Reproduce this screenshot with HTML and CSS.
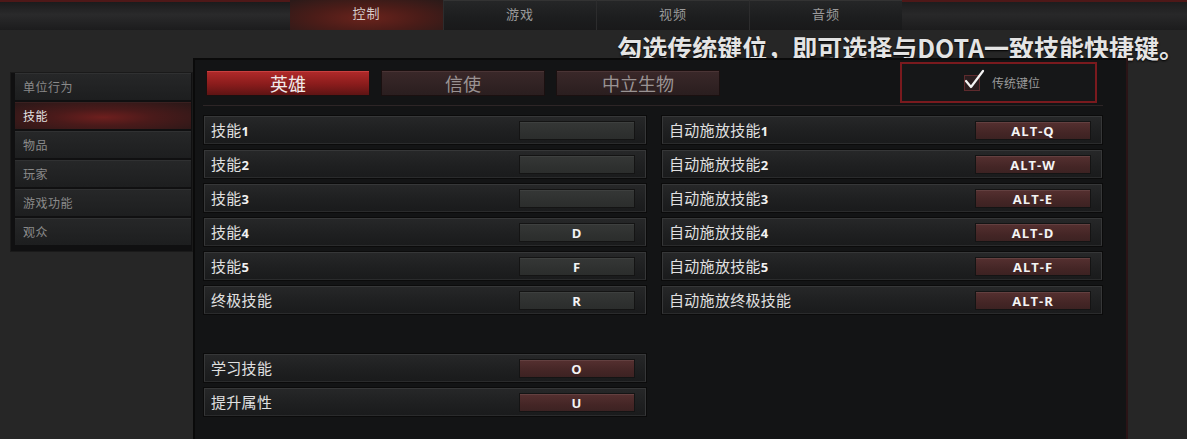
FILE: index.html
```html
<!DOCTYPE html>
<html lang="zh-CN">
<head>
<meta charset="utf-8">
<title>控制设置</title>
<link rel="stylesheet" href="styles.css">
</head>
<body>
<div class="topbar">
  <div class="tb-left"></div>
  <div class="tb-tab active">控制</div>
  <div class="tb-tab">游戏</div>
  <div class="tb-tab">视频</div>
  <div class="tb-tab">音频</div>
  <div class="tb-right"></div>
</div>
<div class="headline">勾选传统键位，即可选择与DOTA一致技能快捷键。</div>
<div class="main">
  <nav class="sidebar">
    <div class="side-item">单位行为</div>
    <div class="side-item active">技能</div>
    <div class="side-item">物品</div>
    <div class="side-item">玩家</div>
    <div class="side-item">游戏功能</div>
    <div class="side-item">观众</div>
  </nav>
  <section class="panel">
    <div class="panel-head">
      <div class="hero-tabs">
        <div class="hero-tab active">英雄</div>
        <div class="hero-tab">信使</div>
        <div class="hero-tab">中立生物</div>
      </div>
      <div class="legacy">
        <span class="check">
          <svg width="22" height="22" viewBox="0 0 22 22"><path d="M3 12 L8 18 L20 2" fill="none" stroke="#f2f2f2" stroke-width="2.2" stroke-linejoin="round" stroke-linecap="round"/></svg>
        </span>
        <span class="legacy-label">传统键位</span>
      </div>
    </div>
    <div class="binds">
      <div class="col">
        <div class="row"><span class="lbl">技能<b>1</b></span><span class="key empty"></span></div>
        <div class="row"><span class="lbl">技能<b>2</b></span><span class="key empty"></span></div>
        <div class="row"><span class="lbl">技能<b>3</b></span><span class="key empty"></span></div>
        <div class="row"><span class="lbl">技能<b>4</b></span><span class="key gray">D</span></div>
        <div class="row"><span class="lbl">技能<b>5</b></span><span class="key gray">F</span></div>
        <div class="row"><span class="lbl">终极技能</span><span class="key gray">R</span></div>
        <div class="row spaced"><span class="lbl">学习技能</span><span class="key red">O</span></div>
        <div class="row"><span class="lbl">提升属性</span><span class="key red">U</span></div>
      </div>
      <div class="col">
        <div class="row"><span class="lbl">自动施放技能<b>1</b></span><span class="key red">ALT-Q</span></div>
        <div class="row"><span class="lbl">自动施放技能<b>2</b></span><span class="key red">ALT-W</span></div>
        <div class="row"><span class="lbl">自动施放技能<b>3</b></span><span class="key red">ALT-E</span></div>
        <div class="row"><span class="lbl">自动施放技能<b>4</b></span><span class="key red">ALT-D</span></div>
        <div class="row"><span class="lbl">自动施放技能<b>5</b></span><span class="key red">ALT-F</span></div>
        <div class="row"><span class="lbl">自动施放终极技能</span><span class="key red">ALT-R</span></div>
      </div>
    </div>
  </section>
</div>
</body>
</html>
```

FILE: styles.css
```css
html, body {
  margin: 0;
  padding: 0;
}
body {
  width: 1187px;
  height: 439px;
  overflow: hidden;
  background: #262626;
  font-family: "Noto Sans CJK SC", "Noto Sans", sans-serif;
  color: #ddd;
}

/* top bar */
.topbar {
  display: flex;
  height: 30px;
  background: linear-gradient(#1a1b1c, #222324 45%, #1b1c1d);
}
.tb-left {
  width: 290px;
  border-top: 2px solid #4e1818;
  background: linear-gradient(#1b1b1c, #2a2a2b 45%, #1c1c1d);
  box-sizing: border-box;
}
.tb-right {
  flex: 1;
  border-top: 2px solid #4e1818;
  background: linear-gradient(#1d1d1e, #282829 45%, #1c1c1d);
  box-sizing: border-box;
}
.tb-tab {
  width: 153px;
  box-sizing: border-box;
  text-align: center;
  font-size: 13px;
  letter-spacing: 1px;
  line-height: 26px;
  color: #9b9b9b;
  background: linear-gradient(#252627, #1c1d1e 60%, #19191a);
  border-left: 1px solid #2c2c2d;
  border-top: 1px solid #333;
}
.tb-tab.active {
  color: #d6cccc;
  border-left: none;
  border-top: none;
  background: radial-gradient(ellipse at 50% 60%, #6a231c 0%, #4a1c18 50%, #2a1a19 100%);
}

/* headline */
.headline {
  height: 22px;
  padding-top: 6px;
  line-height: 22px;
  text-align: right;
  padding-right: 3px;
  font-size: 25px;
  font-weight: 700;
  color: #e4e4e4;
  white-space: nowrap;
  text-shadow: 0 1px 2px #000;
}

/* main area */
.main {
  display: flex;
  align-items: flex-start;
}
.sidebar {
  margin-left: 10px;
  margin-top: 14px;
  width: 183px;
  height: 180px;
  box-sizing: border-box;
  padding: 1px 2px 0 5px;
  background: #101011;
  display: flex;
  flex-direction: column;
  gap: 2px;
  box-shadow: inset 0 0 0 1px #1a1a1a;
}
.side-item {
  height: 27px;
  box-sizing: border-box;
  padding-left: 8px;
  line-height: 26px;
  font-size: 12px;
  letter-spacing: 0.5px;
  color: #8a8a8a;
  background: linear-gradient(#262728, #1d1e1f);
  border-top: 1px solid #303132;
}
.side-item.active {
  color: #e2e2e2;
  border-top-color: #3a2020;
  background: radial-gradient(ellipse at 50% 55%, #6e1f1e 0%, #4a1a1a 40%, #2a1818 100%);
}

.panel {
  width: 935px;
  height: 381px;
  box-sizing: border-box;
  background: #131415;
  border-right: 2px solid #2a1416;
  box-shadow: inset 2px 0 0 #0a0a0a, inset 0 2px 0 #0a0a0a;
}
.panel-head {
  margin-left: 10px;
  width: 900px;
  height: 47px;
  border-bottom: 1px solid #2d2526;
  display: flex;
  align-items: flex-start;
}
.hero-tabs {
  display: flex;
  gap: 11px;
  margin-left: 3px;
  margin-top: 12px;
}
.hero-tab {
  width: 164px;
  height: 26px;
  box-sizing: border-box;
  text-align: center;
  font-size: 18px;
  line-height: 25px;
  color: #9a9393;
  background: linear-gradient(#3a2829, #2a1e1f);
  border: 1px solid #1a1010;
  box-shadow: inset 0 1px 0 #4a3435;
}
.hero-tab.active {
  color: #f0eaea;
  background: linear-gradient(#b22a2a, #8a1c1c 55%, #5e1414);
  box-shadow: inset 0 1px 0 #c84040;
}
.legacy {
  margin-left: auto;
  margin-right: 6px;
  margin-top: 4px;
  width: 197px;
  height: 41px;
  box-sizing: border-box;
  border: 2px solid #7a1a1e;
  background: #161718;
  display: flex;
  align-items: center;
  padding-left: 62px;
}
.check {
  width: 16px;
  height: 16px;
  box-sizing: border-box;
  border: 1px solid #5e2a2d;
  background: #2a1c1e;
  display: flex;
  align-items: flex-end;
  justify-content: flex-start;
  overflow: visible;
}
.check svg {
  flex: none;
  margin-left: -2px;
  margin-bottom: -1px;
}
.legacy-label {
  margin-left: 12px;
  font-size: 12px;
  color: #9a9a9a;
}

/* bindings */
.binds {
  margin-left: 11px;
  margin-top: 10px;
  display: grid;
  grid-template-columns: 442px 440px;
  column-gap: 16px;
  align-items: start;
}
.col {
  display: flex;
  flex-direction: column;
  gap: 6px;
}
.row {
  height: 28px;
  box-sizing: border-box;
  display: flex;
  align-items: center;
  justify-content: space-between;
  background: linear-gradient(#262728, #1e1f20 60%, #1a1b1c);
  border: 1px solid #363738;
  border-bottom-color: #2a2b2c;
  box-shadow: 0 0 0 1px #0b0b0b;
}
.row.spaced {
  margin-top: 34px;
}
.lbl {
  padding-left: 6px;
  font-size: 15px;
  letter-spacing: 0.3px;
  color: #e0e0e0;
  line-height: 26px;
  white-space: nowrap;
}
.lbl b {
  font-family: "Open Sans", "Noto Sans", sans-serif;
  font-weight: 700;
  font-size: 13px;
  letter-spacing: 0;
  color: #f2f2f2;
}
.key {
  width: 116px;
  height: 19px;
  margin-right: 10px;
  box-sizing: border-box;
  text-align: center;
  font-family: "Open Sans", "Noto Sans", sans-serif;
  font-weight: 700;
  font-size: 13px;
  line-height: 18px;
  color: #f4f4f4;
  letter-spacing: 1px;
  border: 1px solid #141414;
}
.key.empty, .key.gray {
  background: linear-gradient(#353736, #2b2d2c);
  box-shadow: inset 0 1px 0 #3e403f;
}
.key.red {
  background: linear-gradient(#553030, #452626 60%, #3c2222);
  box-shadow: inset 0 1px 0 #634040;
}
```
